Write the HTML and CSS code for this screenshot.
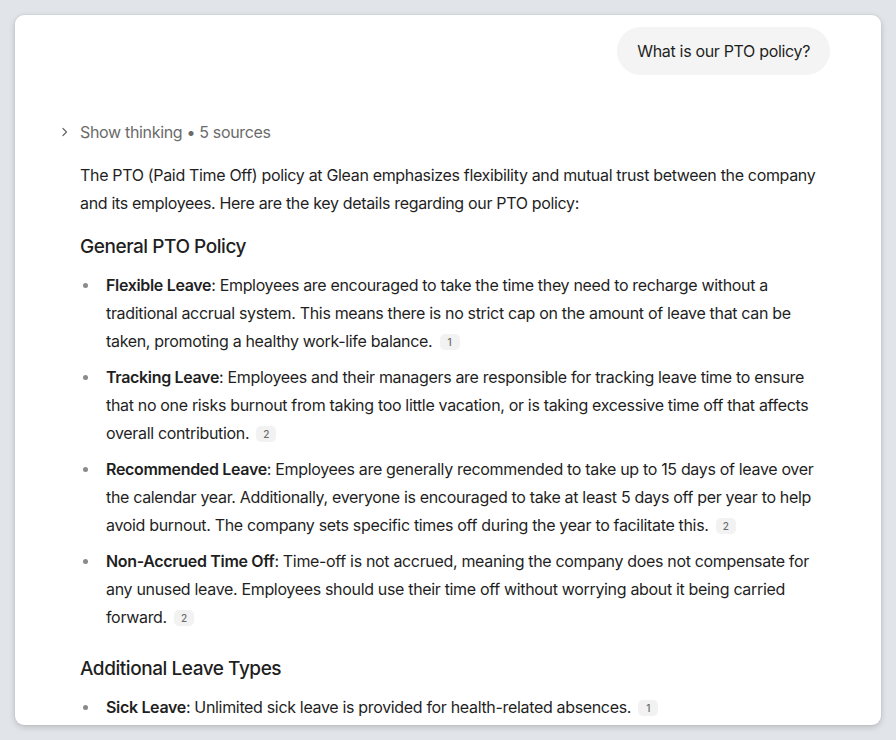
FILE: index.html
```html
<!DOCTYPE html>
<html>
<head>
<meta charset="utf-8">
<link rel="stylesheet" href="styles.css">
</head>
<body>
<div class="card">
  <div class="user-row"><div class="bubble">What is our PTO policy?</div></div>
  <div class="thinking">
    <svg class="chev" width="8" height="10" viewBox="0 0 8 10"><path d="M2 1.5 L5.5 5 L2 8.5" fill="none" stroke="#6b6b6b" stroke-width="1.3" stroke-linecap="round" stroke-linejoin="round"/></svg>
    <span>Show thinking • 5 sources</span>
  </div>
  <p class="para">The PTO (Paid Time Off) policy at Glean emphasizes flexibility and mutual trust between the company and its employees. Here are the key details regarding our PTO policy:</p>
  <h2 class="heading">General PTO Policy</h2>
  <ul class="list">
    <li><b>Flexible Leave</b>: Employees are encouraged to take the time they need to recharge without a traditional accrual system. This means there is no strict cap on the amount of leave that can be taken, promoting a healthy work-life balance. <span class="cite">1</span></li>
    <li><b>Tracking Leave</b>: Employees and their managers are responsible for tracking leave time to ensure that no one risks burnout from taking too little vacation, or is taking excessive time off that affects overall contribution. <span class="cite">2</span></li>
    <li><b>Recommended Leave</b>: Employees are generally recommended to take up to 15 days of leave over the calendar year. Additionally, everyone is encouraged to take at least 5 days off per year to help avoid burnout. The company sets specific times off during the year to facilitate this. <span class="cite">2</span></li>
    <li><b>Non-Accrued Time Off</b>: Time-off is not accrued, meaning the company does not compensate for any unused leave. Employees should use their time off without worrying about it being carried forward. <span class="cite">2</span></li>
  </ul>
  <h2 class="heading heading-2">Additional Leave Types</h2>
  <ul class="list">
    <li><b>Sick Leave</b>: Unlimited sick leave is provided for health-related absences. <span class="cite">1</span></li>
  </ul>
</div>
</body>
</html>
```
FILE: styles.css
```css
html, body {
  margin: 0;
  padding: 0;
  background: #e1e4e8;
}
body {
  padding: 15px;
  font-family: Inter, "Noto Sans", sans-serif;
  color: #1f1f1f;
  letter-spacing: -0.33px;
}
.card {
  width: 866px;
  height: 710px;
  box-sizing: border-box;
  background: #fff;
  border-radius: 9px;
  box-shadow: 0 2px 6px rgba(0,0,0,0.18), 0 0 2px rgba(0,0,0,0.08);
  overflow: hidden;
  padding: 12px 51px 0 65px;
}
.user-row {
  display: flex;
  justify-content: flex-end;
}
.bubble {
  background: #f4f4f4;
  border-radius: 24px;
  height: 48px;
  line-height: 48px;
  padding: 0 20px;
  font-size: 16px;
  color: #1f1f1f;
}
.thinking {
  margin-top: 43px;
  margin-left: -19px;
  display: flex;
  align-items: center;
  gap: 11px;
  height: 28px;
  font-size: 16px;
  color: #6b6b6b;
}
.chev { display: block; }
.para {
  margin: 15px 0 0 0;
  font-size: 16px;
  line-height: 28px;
}
.heading {
  margin: 16px 0 0 0;
  font-size: 19px;
  line-height: 28px;
  font-weight: 500;
  letter-spacing: -0.45px;
}
.heading-2 { margin-top: 24px; }
.list {
  list-style: none;
  margin: 10px 0 0 0;
  padding: 0 0 0 26px;
  font-size: 16px;
  line-height: 28px;
}
.list li {
  position: relative;
  margin-bottom: 8px;
}
.list li::before {
  content: "";
  position: absolute;
  left: -23px;
  top: 12px;
  width: 5px;
  height: 5px;
  border-radius: 50%;
  background: #8a8a8a;
}
.list b { font-weight: 600; }
.cite {
  display: inline-block;
  vertical-align: 1px;
  margin-left: 3px;
  background: #f2f2f2;
  color: #6b6b6b;
  border-radius: 5px;
  font-size: 10px;
  line-height: 16px;
  min-width: 20px;
  text-align: center;
  font-weight: 500;
  letter-spacing: 0;
}
```
